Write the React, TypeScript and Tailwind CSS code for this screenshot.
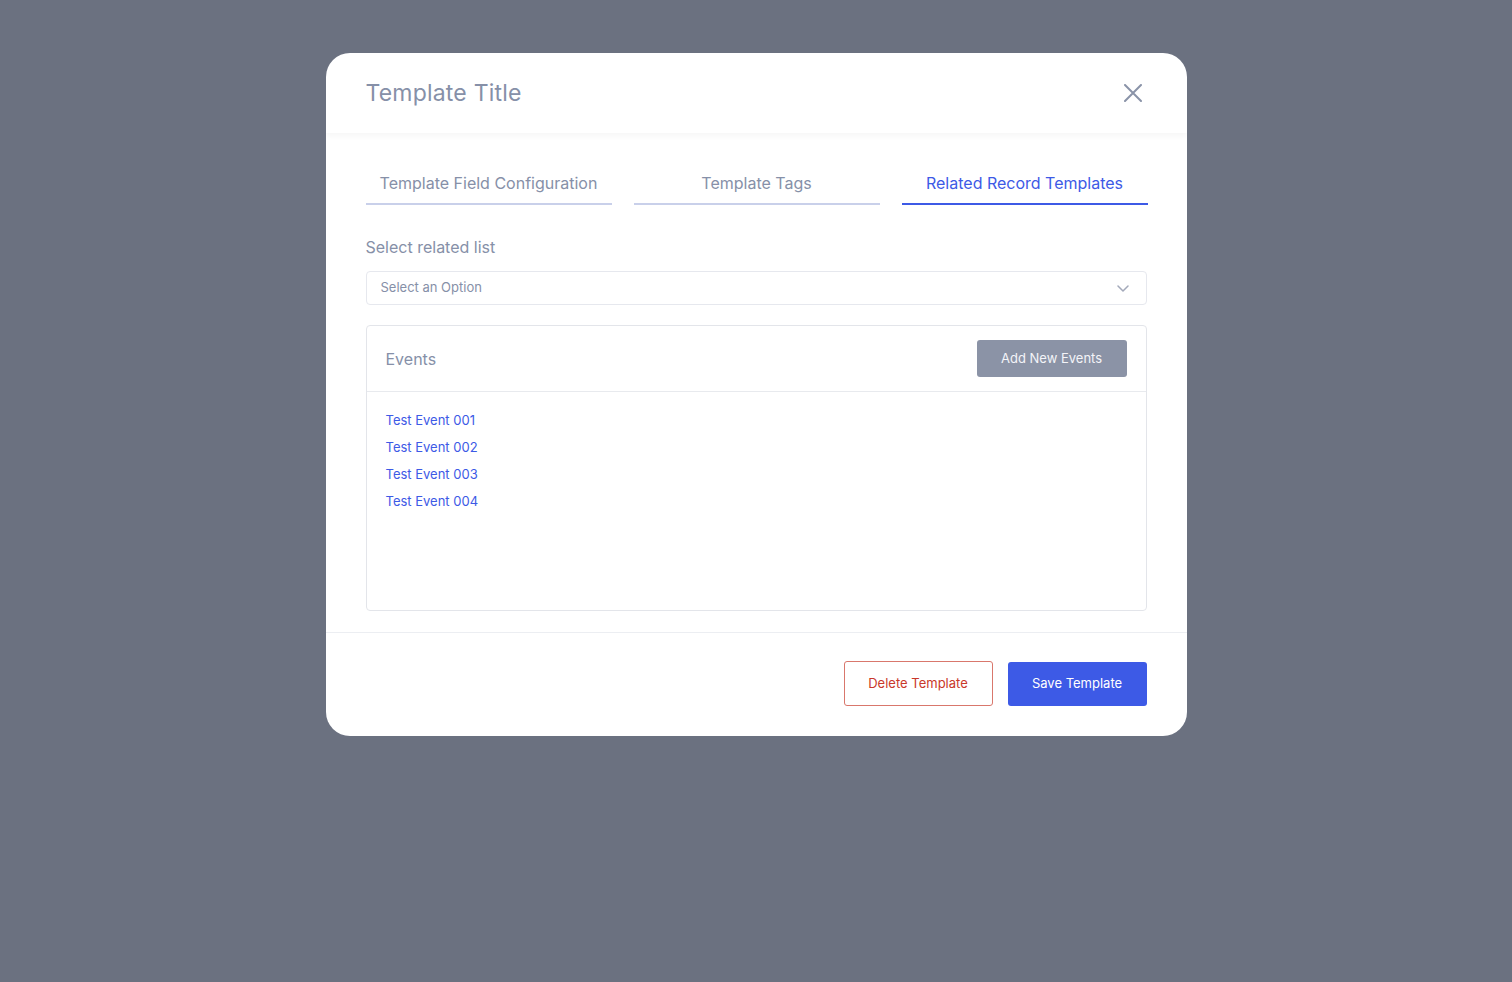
export default function App() {
  const tabs = ["Template Field Configuration", "Template Tags", "Related Record Templates"];
  const events = ["Test Event 001", "Test Event 002", "Test Event 003", "Test Event 004"];

  return (
    <div className="min-h-screen w-full bg-[#6b7180] font-['Inter',sans-serif]">
      <div className="flex justify-center pt-[53px]">
        <div className="w-[861px] rounded-[24px] bg-white overflow-hidden">
          {/* header */}
          <div className="relative z-10 flex h-[80px] items-center justify-between pl-10 pr-[45px] shadow-[0_3px_6px_rgba(0,0,0,0.04)]">
            <h2 className="text-[23px] font-normal text-[#8690a8] tracking-[0.2px]">Template Title</h2>
            <button className="text-[#8a93a8]">
              <svg width="18" height="18" viewBox="0 0 18 18" fill="none" stroke="currentColor" strokeWidth="2" strokeLinecap="round">
                <path d="M1 1L17 17M17 1L1 17" />
              </svg>
            </button>
          </div>

          {/* body */}
          <div className="px-10 pt-[29px] pb-[21px]">
            <div className="flex gap-[22px]">
              {tabs.map((tab, i) => (
                <button
                  key={tab}
                  className={
                    i === 2
                      ? "w-[246px] shrink-0 border-b-2 border-[#3d5ae6] pt-[9px] pb-[8px] text-[16px] leading-6 text-[#3d5ae6]"
                      : "w-[246px] shrink-0 border-b-2 border-[#c9d0ea] pt-[9px] pb-[8px] text-[16px] leading-6 text-[#8690a8]"
                  }
                >
                  {tab}
                </button>
              ))}
            </div>

            <div className="mt-[30px] text-[16px] leading-6 text-[#8690a8]">Select related list</div>

            <div className="mt-[12px] flex h-[34px] items-center justify-between rounded-[4px] border border-[#e6e8ee] pl-[14px] pr-[17px]">
              <span className="text-[13px] text-[#8690a8]">Select an Option</span>
              <svg width="12" height="7" viewBox="0 0 12 7" fill="none" stroke="#a3a9ba" strokeWidth="1.5" strokeLinecap="round" strokeLinejoin="round">
                <path d="M1 1L6 6L11 1" />
              </svg>
            </div>

            <div className="mt-[20px] rounded-[4px] border border-[#e3e5ea]">
              <div className="flex h-[66px] items-center justify-between border-b border-[#e8eaee] px-[19px]">
                <span className="text-[16px] text-[#8690a8]">Events</span>
                <button className="h-[37px] w-[150px] rounded-[3px] bg-[#8b93a6] text-[13px] text-[#f3f4f8]">
                  Add New Events
                </button>
              </div>
              <div className="h-[218px] px-[19px] pt-[15px]">
                {events.map((ev) => (
                  <div key={ev} className="text-[13px] leading-[27px] text-[#3d5ae6]">
                    {ev}
                  </div>
                ))}
              </div>
            </div>
          </div>

          {/* footer */}
          <div className="flex items-end justify-end gap-[15px] border-t border-[#eceef2] px-10 pt-[28px] pb-[30px]">
            <button className="h-[45px] w-[149px] rounded-[3px] border border-[#d9776c] text-[13px] text-[#c9382a]">
              Delete Template
            </button>
            <button className="h-[44px] w-[139px] rounded-[3px] bg-[#3d5ae6] text-[13px] text-white">
              Save Template
            </button>
          </div>
        </div>
      </div>
    </div>
  );
}
